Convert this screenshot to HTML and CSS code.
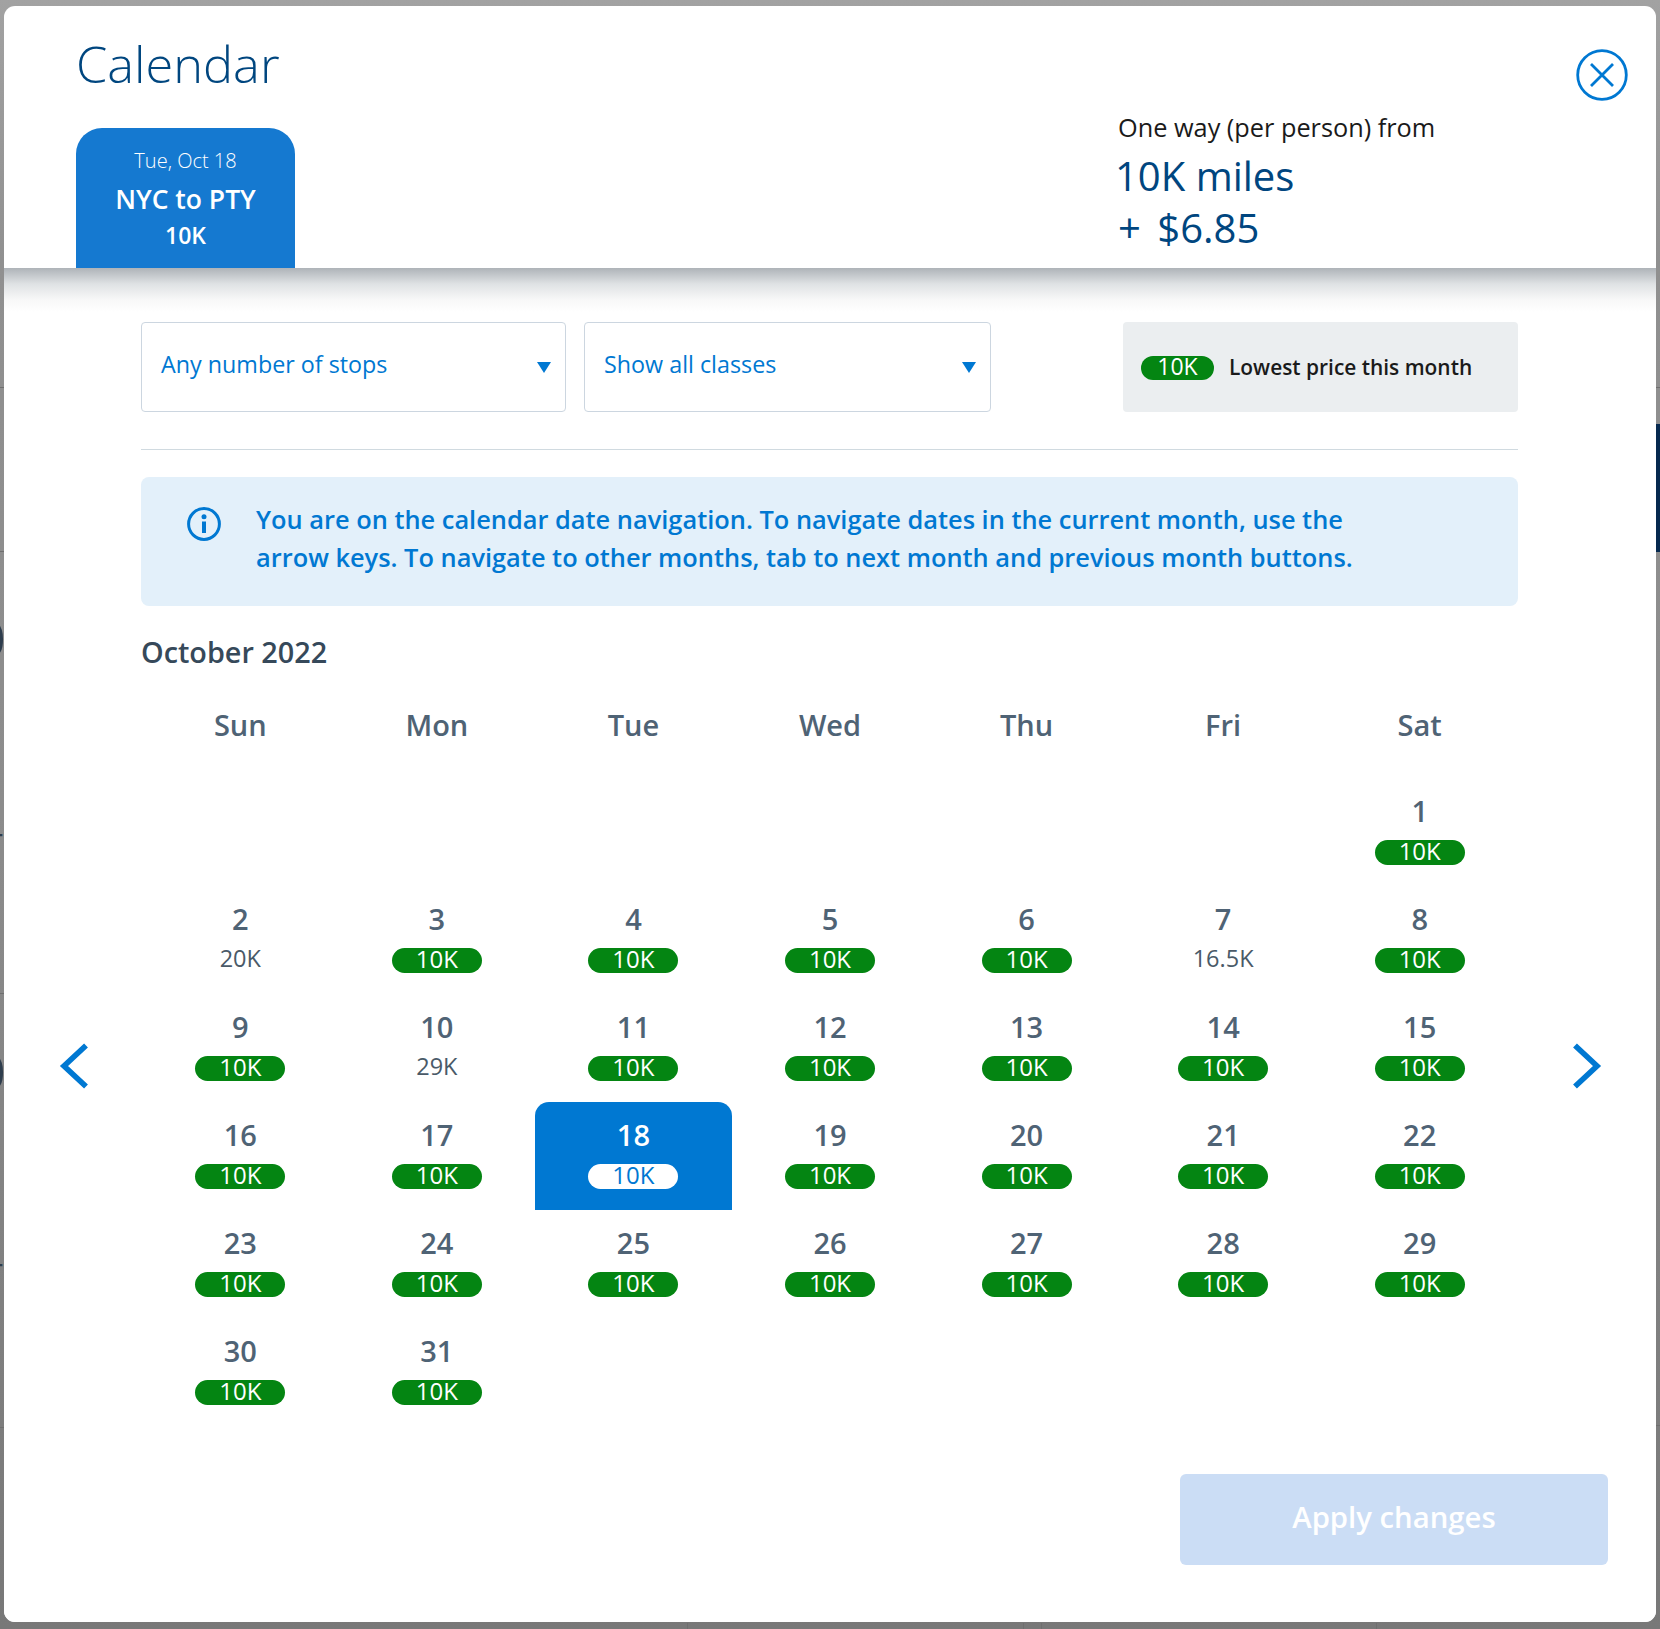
FILE: index.html
```html
<!DOCTYPE html>
<html lang="en">
<head>
<meta charset="utf-8">
<title>Calendar</title>
<link rel="stylesheet" href="styles.css">
</head>
<body>
<svg class="backdrop" width="1660" height="1629" viewBox="0 0 1660 1629" aria-hidden="true">
  <rect x="1656" y="424" width="4" height="128" fill="#06294f"/>
  <g stroke="#6f6f6f" stroke-width="1">
    <path d="M0 387.5H4M1656 387.5H1660M0 551.5H4M0 993.5H4M0 1427.5H4M1656 1425.5H1660"/>
    <path d="M687.5 1623V1629M1023.5 1623V1629M1041.5 1623V1629M1376.5 1623V1629"/>
  </g>
  <g class="frag">
    <text x="-23" y="657" font-size="50">0</text>
    <text x="-23" y="1090" font-size="50">0</text>
    <text x="-14" y="855" font-size="30">T</text>
    <text x="-14" y="1285" font-size="30">T</text>
  </g>
</svg>
<div class="modal">
  <header class="top">
    <div class="top-left">
      <h1 class="title">Calendar</h1>
      <div class="tab">
        <div class="tab-date">Tue, Oct 18</div>
        <div class="tab-route">NYC to PTY</div>
        <div class="tab-price">10K</div>
      </div>
    </div>
    <div class="fare">
      <div class="fare-label">One way (per person) from</div>
      <div class="fare-amount">10K miles</div>
      <div class="fare-amount fare-fee">+ $6.85</div>
    </div>
    <button class="close" aria-label="Close">
      <svg width="52" height="52" viewBox="0 0 52 52" fill="none" stroke="#0078d2"><circle cx="26" cy="26" r="24.3" stroke-width="2.8"/><path d="M15 15L37 37M37 15L15 37" stroke-width="2.8"/></svg>
    </button>
  </header>
  <main class="content">
    <div class="inner">
      <div class="filters">
        <div class="select select-stops"><span>Any number of stops</span><i class="caret"></i></div>
        <div class="select select-class"><span>Show all classes</span><i class="caret"></i></div>
        <div class="legend"><span class="legend-pill">10K</span><span class="legend-text">Lowest price this month</span></div>
      </div>
      <div class="divider"></div>
      <div class="info">
        <svg class="info-icon" width="34" height="34" viewBox="0 0 34 34" fill="none"><circle cx="17" cy="17" r="15.4" stroke="#0078d2" stroke-width="3"/><circle cx="17" cy="9.8" r="2.5" fill="#0078d2"/><path d="M17 14.5V26" stroke="#0078d2" stroke-width="4"/></svg>
        <p class="info-text">You are on the calendar date navigation. To navigate dates in the current month, use the arrow keys. To navigate to other months, tab to next month and previous month buttons.</p>
      </div>
      <h2 class="month">October 2022</h2>
    </div>
    <div class="cal-row">
      <div class="nav nav-prev">
        <svg width="30" height="46" viewBox="0 0 30 46" fill="none" stroke="#0078d2" stroke-width="5.6"><path d="M27 2.5L5 23L27 43.5" stroke-linejoin="miter"/></svg>
      </div>
      <div class="calendar">
        <div class="weekdays">
          <span>Sun</span><span>Mon</span><span>Tue</span><span>Wed</span><span>Thu</span><span>Fri</span><span>Sat</span>
        </div>
        <div class="days">
          <div class="day"></div><div class="day"></div><div class="day"></div><div class="day"></div><div class="day"></div><div class="day"></div>
          <div class="day"><span class="num">1</span><span class="pill">10K</span></div>
          <div class="day"><span class="num">2</span><span class="price">20K</span></div>
          <div class="day"><span class="num">3</span><span class="pill">10K</span></div>
          <div class="day"><span class="num">4</span><span class="pill">10K</span></div>
          <div class="day"><span class="num">5</span><span class="pill">10K</span></div>
          <div class="day"><span class="num">6</span><span class="pill">10K</span></div>
          <div class="day"><span class="num">7</span><span class="price">16.5K</span></div>
          <div class="day"><span class="num">8</span><span class="pill">10K</span></div>
          <div class="day"><span class="num">9</span><span class="pill">10K</span></div>
          <div class="day"><span class="num">10</span><span class="price">29K</span></div>
          <div class="day"><span class="num">11</span><span class="pill">10K</span></div>
          <div class="day"><span class="num">12</span><span class="pill">10K</span></div>
          <div class="day"><span class="num">13</span><span class="pill">10K</span></div>
          <div class="day"><span class="num">14</span><span class="pill">10K</span></div>
          <div class="day"><span class="num">15</span><span class="pill">10K</span></div>
          <div class="day"><span class="num">16</span><span class="pill">10K</span></div>
          <div class="day"><span class="num">17</span><span class="pill">10K</span></div>
          <div class="day day-selected"><span class="num">18</span><span class="pill">10K</span></div>
          <div class="day"><span class="num">19</span><span class="pill">10K</span></div>
          <div class="day"><span class="num">20</span><span class="pill">10K</span></div>
          <div class="day"><span class="num">21</span><span class="pill">10K</span></div>
          <div class="day"><span class="num">22</span><span class="pill">10K</span></div>
          <div class="day"><span class="num">23</span><span class="pill">10K</span></div>
          <div class="day"><span class="num">24</span><span class="pill">10K</span></div>
          <div class="day"><span class="num">25</span><span class="pill">10K</span></div>
          <div class="day"><span class="num">26</span><span class="pill">10K</span></div>
          <div class="day"><span class="num">27</span><span class="pill">10K</span></div>
          <div class="day"><span class="num">28</span><span class="pill">10K</span></div>
          <div class="day"><span class="num">29</span><span class="pill">10K</span></div>
          <div class="day"><span class="num">30</span><span class="pill">10K</span></div>
          <div class="day"><span class="num">31</span><span class="pill">10K</span></div>
        </div>
      </div>
      <div class="nav nav-next">
        <svg width="30" height="46" viewBox="0 0 30 46" fill="none" stroke="#0078d2" stroke-width="5.6"><path d="M3 2.5L25 23L3 43.5" stroke-linejoin="miter"/></svg>
      </div>
    </div>
    <div class="actions"><button class="apply">Apply changes</button></div>
  </main>
</div>
</body>
</html>
```

FILE: styles.css
```css
* { box-sizing: border-box; }
html, body { margin: 0; height: 1629px; overflow: hidden; }
body {
  padding: 6px 4px 7px;
  font-family: "Open Sans", "Noto Sans", sans-serif;
  background: linear-gradient(#a2a2a2 0, #909090 16%, #8c8c8c 50%, #787878 100%);
  position: relative;
}
.backdrop { position: absolute; left: 0; top: 0; }
.frag { fill: #2e3d4d; font-family: "Open Sans", sans-serif; }

.modal {
  position: relative;
  height: 1616px;
  background: #fff;
  border-radius: 11px;
  overflow: hidden;
  display: flex;
  flex-direction: column;
}

/* header */
.top { height: 262px; display: flex; padding-left: 72px; flex: none; }
.top-left { width: 1042px; flex: none; display: flex; flex-direction: column; }
.title {
  margin: 29px 0 0 0;
  height: 93px;
  font-size: 50.5px;
  line-height: 58px;
  font-weight: 300;
  color: #00467f;
}
.tab {
  width: 219px;
  height: 140px;
  background: #1579d0;
  border-radius: 26px 26px 0 0;
  color: #fff;
  text-align: center;
  padding-top: 19px;
}
.tab-date { font-size: 20px; line-height: 28px; font-weight: 300; }
.tab-route { font-size: 26.5px; line-height: 34px; font-weight: 600; margin-top: 7px; }
.tab-price { font-size: 23px; line-height: 30px; font-weight: 600; margin-top: 4px; }

.fare { width: 458px; flex: none; padding-top: 103px; }
.fare-label { font-size: 25.3px; line-height: 36px; color: #1a1a1a; }
.fare-amount { font-size: 40px; line-height: 52px; color: #00467f; margin-top: 5px; margin-left: -3px; font-weight: 400; }
.fare-fee { margin-top: 0; margin-left: 0; word-spacing: 6px; }
.close { width: 52px; height: 52px; padding: 0; margin-top: 43px; background: none; border: 0; flex: none; }
.close svg { display: block; }

/* body */
.content {
  flex: 1;
  background: linear-gradient(#aeb3b8 0, #dfe2e4 16px, #f8f8f8 32px, #fff 44px) no-repeat;
  display: flex;
  flex-direction: column;
  padding-top: 54px;
}
.inner { margin: 0 138px 0 137px; }
.filters { display: flex; height: 90px; }
.select {
  position: relative;
  border: 1px solid #ccd6e0;
  border-radius: 4px;
  color: #0078d2;
  font-size: 23.3px;
  line-height: 32px;
  padding: 25px 0 0 19px;
}
.select-stops { width: 425px; }
.select-class { width: 407px; margin-left: 18px; }
.caret {
  position: absolute;
  right: 14px;
  top: 39px;
  width: 0;
  height: 0;
  border-left: 7px solid transparent;
  border-right: 7px solid transparent;
  border-top: 11px solid #0078d2;
}
.legend {
  margin-left: auto;
  width: 395px;
  background: #ebeef0;
  border-radius: 4px;
  display: flex;
  align-items: center;
  padding: 0 0 0 18px;
}
.legend-pill {
  width: 73px;
  height: 24px;
  border-radius: 12px;
  background: #048512;
  color: #fff;
  font-size: 23px;
  line-height: 21px;
  text-align: center;
  margin-top: 2px;
}
.legend-text { margin-left: 15px; font-size: 20.9px; line-height: 30px; font-weight: 600; color: #1a1a1a; }
.divider { height: 1px; background: #d0dae0; margin-top: 37px; }
.info {
  margin-top: 27px;
  height: 129px;
  background: #e3f0fa;
  border-radius: 8px;
  display: flex;
  padding: 23px 0 0 46px;
}
.info-icon { flex: none; margin-top: 7px; display: block; }
.info-text {
  margin: 0 0 0 35px;
  width: 1130px;
  font-size: 25.4px;
  line-height: 38px;
  font-weight: 600;
  color: #0078d2;
}
.month {
  margin: 26px 0 0 0;
  font-size: 28.8px;
  line-height: 40px;
  font-weight: 600;
  color: #36495a;
  height: 68px;
}

.cal-row { display: flex; align-items: center; height: 726px; }
.nav { width: 137px; flex: none; display: flex; margin-top: 6px; }
.nav-prev { padding-left: 55px; }
.nav-next { padding-left: 54px; }
.calendar { width: 1377px; flex: none; padding-left: 1px; }
.weekdays {
  display: grid;
  grid-template-columns: repeat(7, 1fr);
  height: 78px;
  text-align: center;
  font-size: 29px;
  line-height: 50px;
  font-weight: 600;
  color: #4f6375;
}
.days { display: grid; grid-template-columns: repeat(7, 1fr); grid-auto-rows: 108px; }
.day {
  display: flex;
  flex-direction: column;
  align-items: center;
  padding-top: 13px;
  color: #4f6375;
}
.num { font-size: 29px; line-height: 40px; font-weight: 600; height: 49px; }
.pill {
  width: 90px;
  height: 25px;
  border-radius: 13px;
  background: #048512;
  color: #fff;
  font-size: 24px;
  line-height: 21px;
  text-align: center;
}
.price { font-size: 23.5px; line-height: 21px; color: #4a5a68; }
.day-selected { background: #0078d2; border-radius: 14px 14px 0 0; color: #fff; }
.day-selected .pill { background: #fff; color: #0078d2; }

.actions { display: flex; justify-content: flex-end; padding-right: 48px; margin-top: 48px; }
.apply {
  width: 428px;
  height: 91px;
  background: #cbddf5;
  border: 0;
  border-radius: 6px;
  color: #fff;
  font-family: inherit;
  font-size: 29.3px;
  font-weight: 600;
  padding: 0 0 6px;
}
```
